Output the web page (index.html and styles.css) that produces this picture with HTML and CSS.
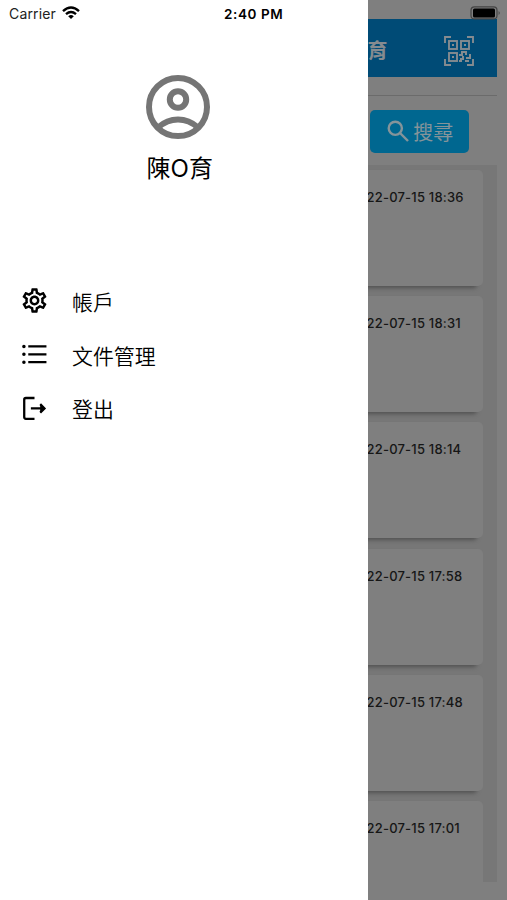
FILE: index.html
```html
<!DOCTYPE html>
<html lang="zh-Hant">
<head>
<meta charset="utf-8">
<title>帳戶</title>
<link rel="stylesheet" href="styles.css">
</head>
<body>
<div class="screen">
  <aside class="drawer">
    <div class="status">
      <span class="carrier">Carrier</span>
      <svg class="wifi" viewBox="0 0 18 14"><path d="M1 5.2Q9-2.1 17 5.2M4 8.2Q9 3.9 14 8.2" fill="none" stroke="#000" stroke-width="2.4"/><path d="M6.2 10.2Q9 8 11.8 10.2L9 13z"/></svg>
      <span class="clock">2:40 PM</span>
    </div>
    <div class="profile">
      <svg class="avatar" viewBox="0 0 64 64" fill="none" stroke="#757575" stroke-width="6"><circle cx="32" cy="32" r="29"/><circle cx="32" cy="24.5" r="8.2"/><path d="M12 52.5Q21 44.5 32 44.5T52 52.5"/></svg>
      <div class="name">陳O育</div>
    </div>
    <nav class="menu">
      <a class="item"><svg viewBox="1 1 22 22"><path d="M19.43 12.98c.04-.32.07-.64.07-.98 0-.34-.03-.66-.07-.98l2.11-1.65c.19-.15.24-.42.12-.64l-2-3.46c-.09-.16-.26-.25-.44-.25-.06 0-.12.01-.17.03l-2.49 1c-.52-.4-1.08-.73-1.69-.98l-.38-2.65C14.46 2.18 14.25 2 14 2h-4c-.25 0-.46.18-.49.42l-.38 2.65c-.61.25-1.17.59-1.69.98l-2.49-1c-.06-.02-.12-.03-.18-.03-.17 0-.34.09-.43.25l-2 3.46c-.13.22-.07.49.12.64l2.11 1.65c-.04.32-.07.65-.07.98 0 .33.03.66.07.98l-2.11 1.65c-.19.15-.24.42-.12.64l2 3.46c.09.16.26.25.44.25.06 0 .12-.01.17-.03l2.49-1c.52.4 1.08.73 1.69.98l.38 2.65c.03.24.24.42.49.42h4c.25 0 .46-.18.49-.42l.38-2.65c.61-.25 1.17-.59 1.69-.98l2.49 1c.06.02.12.03.18.03.17 0 .34-.09.43-.25l2-3.46c.12-.22.07-.49-.12-.64l-2.11-1.65zm-1.98-1.71c.04.31.05.52.05.73 0 .21-.02.43-.05.73l-.14 1.13.89.7 1.08.84-.7 1.21-1.27-.51-1.04-.42-.9.68c-.43.32-.84.56-1.25.73l-1.06.43-.16 1.13-.2 1.35h-1.4l-.19-1.35-.16-1.13-1.06-.43c-.43-.18-.83-.41-1.23-.71l-.91-.7-1.06.43-1.27.51-.7-1.21 1.08-.84.89-.7-.14-1.13c-.03-.31-.05-.54-.05-.74s.02-.43.05-.73l.14-1.13-.89-.7-1.08-.84.7-1.21 1.27.51 1.04.42.9-.68c.43-.32.84-.56 1.25-.73l1.06-.43.16-1.13.2-1.35h1.39l.19 1.35.16 1.13 1.06.43c.43.18.83.41 1.23.71l.91.7 1.06-.43 1.27-.51.7 1.21-1.07.85-.89.7.14 1.13zM12 8c-2.21 0-4 1.79-4 4s1.79 4 4 4 4-1.79 4-4-1.79-4-4-4zm0 6c-1.1 0-2-.9-2-2s.9-2 2-2 2 .9 2 2-.9 2-2 2z"/></svg><span>帳戶</span></a>
      <a class="item"><svg viewBox="0 0 26 26" fill="none" stroke="#000" stroke-width="2.2"><path d="M7 5.2h17.5M7 12.8h17.5M7 20.4h17.5" /><path d="M2.8 5.2h.01M2.8 12.8h.01M2.8 20.4h.01" stroke-width="3.4" stroke-linecap="round"/></svg><span>文件管理</span></a>
      <a class="item"><svg viewBox="0 0 26 26" fill="none" stroke="#000" stroke-width="2.2"><path d="M13 2.9H4.7Q3.1 2.9 3.1 4.5V21.3Q3.1 22.9 4.7 22.9H13M9.5 12.9H22M18.5 8.8l4.1 4.1-4.1 4.1"/><path d="M18.5 8.8l4.8 4.1-4.8 4.1z" fill="#000" stroke="none"/></svg><span>登出</span></a>
    </nav>
  </aside>
  <main class="page">
    <div class="battery-row"><svg class="battery" viewBox="0 0 32 14"><rect x="2" y=".9" width="26" height="12" rx="3.5" fill="none" stroke="#444" stroke-width="1.2"/><rect x="4" y="2.5" width="22" height="9" rx="1.5"/><path d="M29.5 5q3 2 0 4z" fill="#555"/></svg></div>
    <header class="bar">
      <span class="title">育</span>
      <svg class="qr" viewBox="0 0 30 30" fill="none" stroke="#858b90" stroke-width="1.9"><path d="M1 7V1h6M23 1h6v6M29 23v6h-6M7 29H1v-6"/><rect x="5" y="5" width="8" height="8"/><rect x="17" y="5" width="8" height="8"/><rect x="5" y="17" width="8" height="8"/><path d="M8 9h2M20 9h2M8 21h2M15 19h3v-3h4v3M19 20v3h-3M22 22h4v-4M15 25h3M21 25h4" stroke-width="2"/></svg>
    </header>
    <div class="search">
      <button class="find"><svg viewBox="0 0 22 22" fill="none" stroke="#85949a" stroke-width="2.4"><circle cx="8.3" cy="8.3" r="6.6"/><path d="M13 13l8 8"/></svg>搜尋</button>
    </div>
    <div class="list">
      <div class="card">22-07-15 18:36</div>
      <div class="card">22-07-15 18:31</div>
      <div class="card">22-07-15 18:14</div>
      <div class="card">22-07-15 17:58</div>
      <div class="card">22-07-15 17:48</div>
      <div class="card">22-07-15 17:01</div>
    </div>
  </main>
</div>
</body>
</html>
```
FILE: styles.css
```css
* { box-sizing: border-box; }
body { margin: 0; font-family: Inter, "Noto Sans CJK TC", sans-serif; color: #000; }
.screen { display: flex; width: 507px; height: 900px; overflow: hidden; background: #7f7f7f; }
.drawer { width: 367.5px; flex: none; background: #fff; }
.status { display: flex; align-items: center; height: 27px; padding-left: 9px; font-size: 14px; }
.carrier { width: 53px; color: #222; letter-spacing: .15px; }
.wifi { width: 18px; height: 14px; margin-top: -2px; }
.clock { margin-left: 144px; font-size: 13.5px; font-weight: 600; letter-spacing: .6px; white-space: nowrap; }
.profile { display: flex; flex-direction: column; align-items: center; padding: 48px 11px 0 0; height: 247px; }
.avatar { width: 64px; height: 64px; }
.name { margin: 12px 0 0 3px; font-size: 24px; line-height: 36px; }
.menu { display: flex; flex-direction: column; }
.item { display: flex; align-items: center; height: 53.8px; padding-left: 20.5px; font-size: 20.9px; font-weight: 350; }
.item svg { width: 27px; height: 27px; margin-right: 24.5px; }
.page { width: 139px; height: 882px; flex: none; overflow: hidden; }
.bar, .search, .list { width: 129px; }
.battery-row { height: 19px; padding: 6px 0 0 101px; }
.battery { display: block; width: 32px; height: 14px; }
.bar { display: flex; align-items: center; height: 58px; background: #004b76; }
.title { width: 76px; color: #858b90; font-size: 20px; font-weight: 700; line-height: 30px; padding-top: 6px; }
.qr { width: 30px; height: 30px; margin-top: 5px; }
.search { height: 88px; padding: 33px 0 0 2.5px; background: linear-gradient(#6b6b6b, #6b6b6b) 0 18px / 100% 1px no-repeat; }
.find { display: flex; align-items: center; justify-content: center; gap: 4px; width: 98.5px; height: 42.5px; padding: 0 0 0 2px; border: 0; border-radius: 5px; background: #006790; color: #85949a; font: 20px "Noto Sans CJK TC", sans-serif; }
.find svg { width: 22px; height: 22px; }
.list { display: flex; flex-direction: column; gap: 10.2px; height: 717px; padding-top: 5px; background: #777; }
.card { flex: none; width: 115px; height: 116px; padding-top: 18px; border-radius: 0 5px 5px 0; background: #7f7f7f; box-shadow: -5px 3px 4px -1px #505050; color: #161616; font-size: 13px; font-weight: 450; line-height: 18px; letter-spacing: .2px; white-space: nowrap; text-indent: -1px; }
```
